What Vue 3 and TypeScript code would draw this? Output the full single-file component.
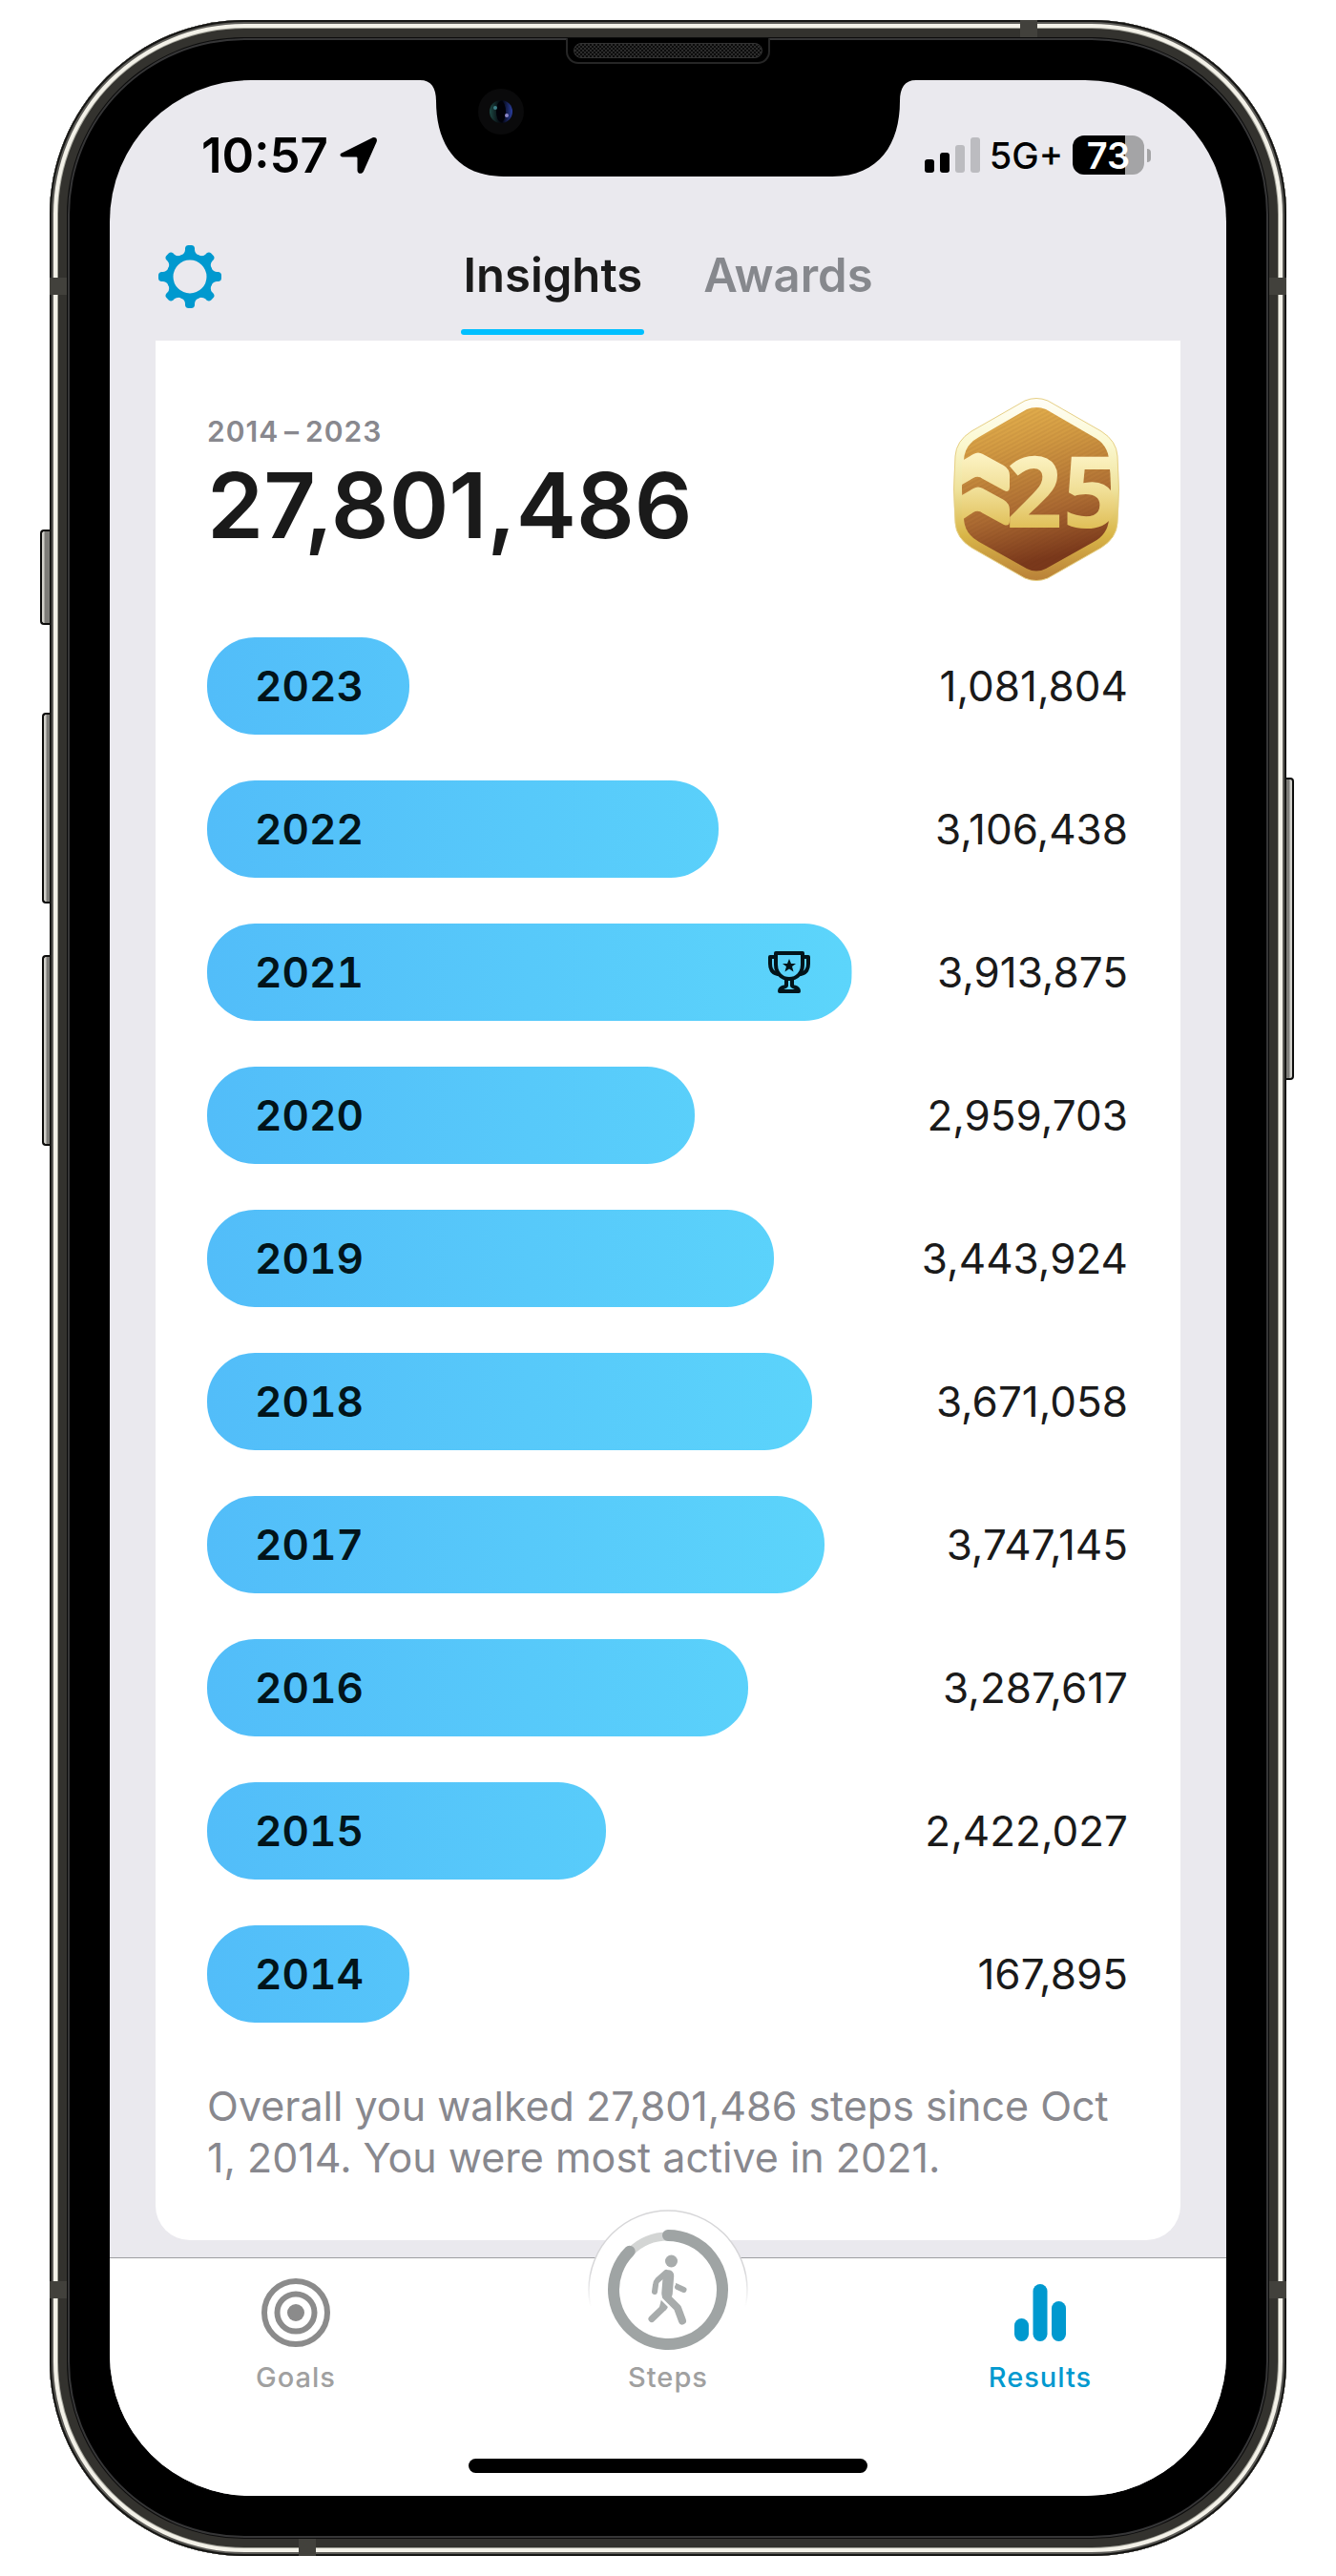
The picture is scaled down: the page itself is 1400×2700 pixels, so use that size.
<script setup lang="ts">
import { computed, ref } from 'vue'

interface YearSteps {
  year: number
  steps: number
}

type Section = 'Insights' | 'Awards'

const sections: Section[] = ['Insights', 'Awards']
const activeSection = ref<Section>('Insights')

const years: YearSteps[] = [
  { year: 2023, steps: 1081804 },
  { year: 2022, steps: 3106438 },
  { year: 2021, steps: 3913875 },
  { year: 2020, steps: 2959703 },
  { year: 2019, steps: 3443924 },
  { year: 2018, steps: 3671058 },
  { year: 2017, steps: 3747145 },
  { year: 2016, steps: 3287617 },
  { year: 2015, steps: 2422027 },
  { year: 2014, steps: 167895 },
]

const total = 27801486
const best = computed(() => years.reduce((a, b) => (b.steps > a.steps ? b : a)))

const format = (n: number): string => n.toLocaleString('en-US')
const barWidth = (n: number): string => `${(n / best.value.steps) * 100}%`

const gearTeeth = [0, 45, 90, 135, 180, 225, 270, 315]
</script>

<template>
  <main class="page">
    <div class="phone">
      <i class="key key-mute"></i>
      <i class="key key-up"></i>
      <i class="key key-down"></i>
      <i class="key key-power"></i>
      <i class="band band-top"></i>
      <i class="band band-left-top"></i>
      <i class="band band-right-top"></i>
      <i class="band band-left-bottom"></i>
      <i class="band band-right-bottom"></i>
      <i class="band band-bottom"></i>
      <i class="speaker"></i>

      <div class="screen">
        <svg class="notch" viewBox="0 0 520 101" aria-hidden="true">
          <defs>
            <linearGradient id="lens" x1="0" y1="0" x2="1" y2="0">
              <stop offset="0" stop-color="#1d4a45" />
              <stop offset="0.35" stop-color="#0a1418" />
              <stop offset="0.55" stop-color="#02030c" />
              <stop offset="1" stop-color="#2b3fa0" />
            </linearGradient>
          </defs>
          <path d="M0 0C12 0 17 8 17 22C17 66 38 101 88 101H432C482 101 503 66 503 22C503 8 508 0 520 0Z" fill="#000" />
          <circle cx="85" cy="33" r="24" fill="#0a0a0b" />
          <circle cx="85" cy="33" r="12" fill="url(#lens)" />
          <ellipse cx="85" cy="33" rx="5" ry="11" fill="#010108" />
          <circle cx="79" cy="29" r="2" fill="#3f7f88" />
          <circle cx="91" cy="37" r="2" fill="#8c86c8" />
        </svg>

        <header class="status">
          <div class="clock">
            <span>10:57</span>
            <svg width="40" height="40" viewBox="0 0 40 40" aria-hidden="true">
              <path d="M3 17L34 1.500C37.500 0 40 2.500 38.500 6L25 36.500C23.500 40 18.500 39.500 18.500 35.500V23C18.500 22 18 21.500 17 21.500H4.500C0 21.500 -1 18.500 3 17Z" />
            </svg>
          </div>
          <div class="radios">
            <svg width="58" height="38" viewBox="0 0 58 38" aria-hidden="true">
              <rect x="0" y="23" width="10" height="14" rx="3" />
              <rect x="16" y="16" width="10" height="21" rx="3" />
              <rect x="32" y="8" width="10" height="29" rx="3" fill="#bcbcc0" />
              <rect x="48" y="0" width="10" height="37" rx="3" fill="#bcbcc0" />
            </svg>
            <span class="network">5G+</span>
            <div class="battery"><span>73</span></div>
          </div>
        </header>

        <nav class="nav">
          <button class="gear" type="button" aria-label="Settings">
            <svg width="66" height="66" viewBox="-33 -33 66 66" aria-hidden="true">
              <circle r="21" fill="none" stroke="#0099cf" stroke-width="7" />
              <path
                v-for="angle in gearTeeth"
                :key="angle"
                :transform="`rotate(${angle})`"
                d="M-12 -20Q-5 -24 -5 -28V-30Q-4.500 -33 -1.500 -33H1.500Q4.500 -33 5 -30V-28Q5 -24 12 -20Z"
                fill="#0099cf"
              />
            </svg>
          </button>
          <div class="tabs">
            <button
              v-for="section in sections"
              :key="section"
              class="tab"
              :class="{ active: section === activeSection }"
              type="button"
              @click="activeSection = section"
            >
              {{ section }}
            </button>
          </div>
        </nav>

        <section class="card">
          <div class="summary">
            <div>
              <p class="range">2014&#8201;–&#8201;2023</p>
              <h1 class="total">{{ format(total) }}</h1>
            </div>
            <svg class="badge" width="176" height="194" viewBox="0 0 176 194" role="img" aria-label="25 million steps">
              <defs>
                <linearGradient id="rim" x1="0" y1="0" x2="0" y2="1">
                  <stop offset="0" stop-color="#fffef8" />
                  <stop offset="0.25" stop-color="#fbf8cf" />
                  <stop offset="0.5" stop-color="#efe29c" />
                  <stop offset="0.75" stop-color="#d9b648" />
                  <stop offset="1" stop-color="#b98038" />
                </linearGradient>
                <linearGradient id="field" x1="0" y1="0" x2="0.2" y2="1">
                  <stop offset="0" stop-color="#e8b550" />
                  <stop offset="0.3" stop-color="#d19942" />
                  <stop offset="0.7" stop-color="#ab6a32" />
                  <stop offset="1" stop-color="#7a381b" />
                </linearGradient>
                <linearGradient id="gold" gradientUnits="userSpaceOnUse" x1="0" y1="58" x2="0" y2="140">
                  <stop offset="0" stop-color="#fdf4c6" />
                  <stop offset="0.5" stop-color="#f0de95" />
                  <stop offset="1" stop-color="#dfbd54" />
                </linearGradient>
                <pattern id="grain" width="6" height="4" patternUnits="userSpaceOnUse" patternTransform="rotate(-28)">
                  <path d="M0 1H6" stroke="#5c2a10" stroke-opacity="0.12" />
                </pattern>
              </defs>
              <path d="M76 4Q88 -1 100 4L156 36Q172 46 173 62Q176 97 173 132Q172 148 156 158L100 190Q88 195 76 190L20 158Q4 148 3 132Q0 97 3 62Q4 46 20 36Z" fill="url(#rim)" stroke="#e6cf84" />
              <path d="M78 13Q88 9 98 13L148 42Q163 50 164 66Q168 97 164 128Q163 144 148 152L98 180Q88 185 78 180L28 152Q13 144 12 128Q8 97 12 66Q13 50 28 42Z" fill="url(#field)" />
              <path d="M78 13Q88 9 98 13L148 42Q163 50 164 66Q168 97 164 128Q163 144 148 152L98 180Q88 185 78 180L28 152Q13 144 12 128Q8 97 12 66Q13 50 28 42Z" fill="url(#grain)" />
              <g fill="url(#gold)">
                <path d="M10 67L22 60Q27 57 32 60L54 72Q60 76 60 82V94Q60 101 54 98L32 86Q27 82 22 85L10 92Z" />
                <path d="M10 103L22 96Q27 93 32 96L54 108Q60 112 60 118V130Q60 136 54 134L32 122Q27 118 22 121L10 129Z" />
                <text x="56" y="137" class="badge-text">25</text>
              </g>
            </svg>
          </div>

          <ul class="chart">
            <li v-for="row in years" :key="row.year" class="row">
              <div class="track">
                <div class="bar" :style="{ width: barWidth(row.steps) }">
                  <span>{{ row.year }}</span>
                  <svg v-if="row.year === best.year" width="44" height="44" viewBox="0 0 44 44" role="img" aria-label="Best year">
                    <g fill="none" stroke="#02141a" stroke-width="4" stroke-linejoin="round" stroke-linecap="round">
                      <path d="M8 2H36V14C36 23 30 29 22 29C14 29 8 23 8 14Z" />
                      <path d="M7 6H2V13C2 19 5 23 10 24" />
                      <path d="M37 6H42V13C42 19 39 23 34 24" />
                      <path d="M19 30V36C19 38 12 37 12 42H32C32 37 25 38 25 36V30" />
                    </g>
                    <path d="M22 8L24 13H29L25 16L26.500 21.500L22 18.500L17.500 21.500L19 16L15 13H20Z" fill="#02141a" />
                  </svg>
                </div>
              </div>
              <span class="value">{{ format(row.steps) }}</span>
            </li>
          </ul>

          <p class="note">
            Overall you walked {{ format(total) }} steps since Oct 1, 2014. You were most active in {{ best.year }}.
          </p>
        </section>

        <footer class="tabbar">
          <a class="dest goals" href="#goals">
            <svg width="72" height="72" viewBox="0 0 72 72" aria-hidden="true">
              <circle cx="36" cy="36" r="33" fill="none" stroke="#8b8b8b" stroke-width="6" />
              <circle cx="36" cy="36" r="19.500" fill="none" stroke="#8b8b8b" stroke-width="6" />
              <circle cx="36" cy="36" r="9" fill="#8b8b8b" />
            </svg>
            <span>Goals</span>
          </a>
          <a class="dest steps" href="#steps">
            <svg class="dial" width="168" height="168" viewBox="-84 -84 168 168" aria-hidden="true">
              <defs>
                <linearGradient id="fade" gradientUnits="userSpaceOnUse" x1="0" y1="-20" x2="0" y2="18">
                  <stop offset="0" stop-color="#d6d6d8" />
                  <stop offset="1" stop-color="#ffffff" />
                </linearGradient>
              </defs>
              <circle r="83" fill="#fff" stroke="url(#fade)" stroke-width="1.500" />
              <circle r="56" fill="none" stroke="#d3d5d4" stroke-width="9" />
              <path d="M0 -57A57 57 0 1 1 -40.300 -40.300" fill="none" stroke="#9fa4a4" stroke-width="12" stroke-linecap="round" />
              <g fill="none" stroke="#a8acac" stroke-linecap="round" stroke-linejoin="round">
                <path d="M-2 -18L-11 -10Q-13 -8 -13 -5L-14 2" stroke-width="6" />
                <path d="M10 -3L16.500 0" stroke-width="6" />
                <path d="M-4 18L-17 30.500" stroke-width="7" />
                <path d="M0.500 -15L-1 4" stroke-width="11.500" />
                <path d="M-2 7L10 19L15 32.500" stroke-width="8" />
              </g>
              <path d="M-7 10L0 17L-3 22L-9 18Z" fill="#a8acac" />
              <path d="M8 -7V-1L11 0V-6Z" fill="#a8acac" />
              <path d="M-8 9L1 18" stroke="#fff" stroke-width="1.500" />
              <circle cx="3.500" cy="-30" r="6.500" fill="#a8acac" />
            </svg>
            <span>Steps</span>
          </a>
          <a class="dest results" href="#results" aria-current="page">
            <svg width="54" height="72" viewBox="0 0 54 72" fill="#0099cf" aria-hidden="true">
              <rect x="0" y="42" width="15" height="24" rx="7.500" />
              <rect x="19.500" y="6" width="15" height="60" rx="7.500" />
              <rect x="39" y="24" width="15" height="42" rx="7.500" />
            </svg>
            <span>Results</span>
          </a>
          <i class="home"></i>
        </footer>
      </div>
    </div>
  </main>
</template>

<style>
body {
  background: #fff;
}
</style>

<style scoped>
.page {
  box-sizing: border-box;
  padding: 21px 52px;
  font-family: Inter, "Liberation Sans", sans-serif;
  color: #1a1a1a;
}

.page p,
.page h1,
.page ul {
  margin: 0;
  padding: 0;
}

.page button {
  padding: 0;
  border: 0;
  background: none;
  font: inherit;
  color: inherit;
  cursor: pointer;
}

.page svg {
  display: block;
}

/* Device shell */
.phone {
  position: relative;
  max-width: 1296px;
  box-sizing: border-box;
  margin: 0 auto;
  padding: 63px;
  border-radius: 204px;
  background: #000;
  box-shadow:
    inset 0 0 0 2px #151513,
    inset 0 0 0 4px #5c5b57,
    inset 0 0 0 8px #f3f1e8,
    inset 0 0 0 9px #a3a39a,
    inset 0 0 0 18px #33322e,
    inset 0 0 0 19px #0c0c0c,
    inset 0 0 0 21px #363637;
}

.key {
  position: absolute;
  left: -8px;
  width: 8px;
  height: 200px;
  box-sizing: border-box;
  border: 2px solid #0c0c0b;
  border-right: 0;
  border-radius: 4px 0 0 4px;
  background: linear-gradient(90deg, #d0cfc9 0 2px, #7d7c78 3px);
}

.key-mute {
  top: 534px;
  left: -10px;
  width: 10px;
  height: 100px;
}

.key-up {
  top: 726px;
}

.key-down {
  top: 980px;
}

.key-power {
  top: 794px;
  left: auto;
  right: -8px;
  height: 317px;
  border-right: 2px solid #0c0c0b;
  border-left: 0;
  border-radius: 0 4px 4px 0;
  background: linear-gradient(270deg, #d0cfc9 0 2px, #7d7c78 3px);
}

.band {
  position: absolute;
  width: 18px;
  height: 18px;
  background: #42413c;
}

.band-top {
  top: 0;
  right: 261px;
}

.band-bottom {
  bottom: 0;
  left: 261px;
}

.band-left-top,
.band-right-top {
  top: 270px;
}

.band-left-bottom,
.band-right-bottom {
  bottom: 270px;
}

.band-left-top,
.band-left-bottom {
  left: 0;
}

.band-right-top,
.band-right-bottom {
  right: 0;
}

.speaker {
  position: absolute;
  top: 19px;
  left: 50%;
  width: 214px;
  height: 27px;
  box-sizing: border-box;
  margin-left: -107px;
  padding: 5px 6px;
  border: 2px solid #262626;
  border-top: 0;
  border-radius: 2px 2px 13px 13px;
  background: #000;
}

.speaker::before {
  content: "";
  display: block;
  height: 16px;
  box-sizing: border-box;
  border: 1px solid #333;
  border-radius: 8px;
  background: repeating-conic-gradient(#2c2c2c 0 25%, #0c0c0c 0 50%) 0 0 / 4px 4px;
}

/* Screen */
.screen {
  position: relative;
  overflow: hidden;
  border-radius: 148px;
  background: #eae9ee;
}

.notch {
  position: absolute;
  top: 0;
  left: 50%;
  width: 520px;
  height: 101px;
  margin-left: -260px;
}

.status {
  display: flex;
  justify-content: space-between;
  align-items: center;
  height: 157px;
  padding: 0 79px 0 96px;
}

.clock,
.radios {
  display: flex;
  align-items: center;
  gap: 12px;
  color: #000;
}

.radios {
  gap: 10px;
}

.clock {
  font-size: 51px;
  font-weight: 600;
}

.network {
  font-size: 38px;
  font-weight: 500;
}

.battery {
  position: relative;
  display: flex;
  justify-content: center;
  align-items: center;
  width: 75px;
  height: 41px;
  margin-right: 7px;
  border-radius: 12px;
  background: linear-gradient(90deg, #000 73%, #a4a4a6 73%);
  color: #fff;
  font-size: 38px;
  font-weight: 600;
}

.battery::after {
  content: "";
  position: absolute;
  right: -7px;
  width: 4px;
  height: 14px;
  border-radius: 0 4px 4px 0;
  background: #a4a4a6;
}

.nav {
  display: grid;
  grid-template-columns: 1fr auto 1fr;
  align-items: start;
  height: 116px;
  padding: 0 51px;
}

.gear {
  justify-self: start;
  padding-top: 16px !important;
}

.tabs {
  display: flex;
  gap: 60px;
  height: 110px;
}

.page .tab {
  position: relative;
  padding: 0 2px 16px;
  color: #86888d;
  font-size: 49px;
  font-weight: 600;
}

.page .tab.active {
  color: #1a1a1a;
}

.tab.active::after {
  content: "";
  position: absolute;
  right: 0;
  bottom: 0;
  left: 0;
  height: 6px;
  border-radius: 3px;
  background: #00bfff;
}

/* Results card */
.card {
  margin: 0 48px 18px;
  padding: 59px 55px 60px 54px;
  border-radius: 0 0 36px 36px;
  background: #fff;
}

.summary {
  display: flex;
  justify-content: space-between;
  align-items: flex-start;
  padding-right: 8px;
}

.range {
  padding-top: 18px !important;
  color: #88888e;
  font-size: 30px;
  font-weight: 600;
  line-height: 36px;
  letter-spacing: 1px;
}

.total {
  font-size: 95px;
  font-weight: 600;
  line-height: 120px;
}

.page .badge {
  overflow: visible;
}

.badge-text {
  font-family: "Open Sans", sans-serif;
  font-size: 104px;
  font-weight: 700;
}

.chart {
  display: flex;
  flex-direction: column;
  gap: 48px;
  margin-top: 58px !important;
  list-style: none;
}

.row {
  display: flex;
  justify-content: space-between;
  align-items: center;
}

.track {
  flex: 0 0 70%;
  container-type: inline-size;
}

/* The gradient spans the whole track, so a bar only reveals its own share */
.bar {
  display: flex;
  justify-content: space-between;
  align-items: center;
  min-width: 212px;
  height: 102px;
  box-sizing: border-box;
  padding: 0 44px 0 50px;
  border-radius: 50px;
  background: linear-gradient(90deg, #52bdf9, #5cd5fb) 0 0 / 100cqw 100%;
  color: #02141a;
  font-size: 44px;
  font-weight: 600;
  font-variant-numeric: tabular-nums;
}

.value {
  font-size: 44px;
}

.note {
  padding-top: 60px !important;
  color: #88888e;
  font-size: 43px;
  line-height: 54px;
}

/* Bottom navigation */
.tabbar {
  position: relative;
  display: grid;
  grid-template-columns: repeat(3, 1fr);
  height: 249px;
  border-top: 1px solid #9d9da1;
  background: #fff;
}

.dest {
  display: flex;
  flex-direction: column;
  align-items: center;
  gap: 12px;
  padding-top: 21px;
  color: #a0a0a0;
  font-size: 29px;
  font-weight: 500;
  line-height: 40px;
  letter-spacing: 1px;
  text-decoration: none;
}

.steps {
  margin-top: -51px;
  padding-top: 0;
  gap: 0;
}

.steps span {
  margin-top: -12px;
}

.results {
  color: #0099cf;
}

.home {
  position: absolute;
  bottom: 24px;
  left: 50%;
  width: 418px;
  height: 15px;
  margin-left: -209px;
  border-radius: 8px;
  background: #000;
}
</style>
